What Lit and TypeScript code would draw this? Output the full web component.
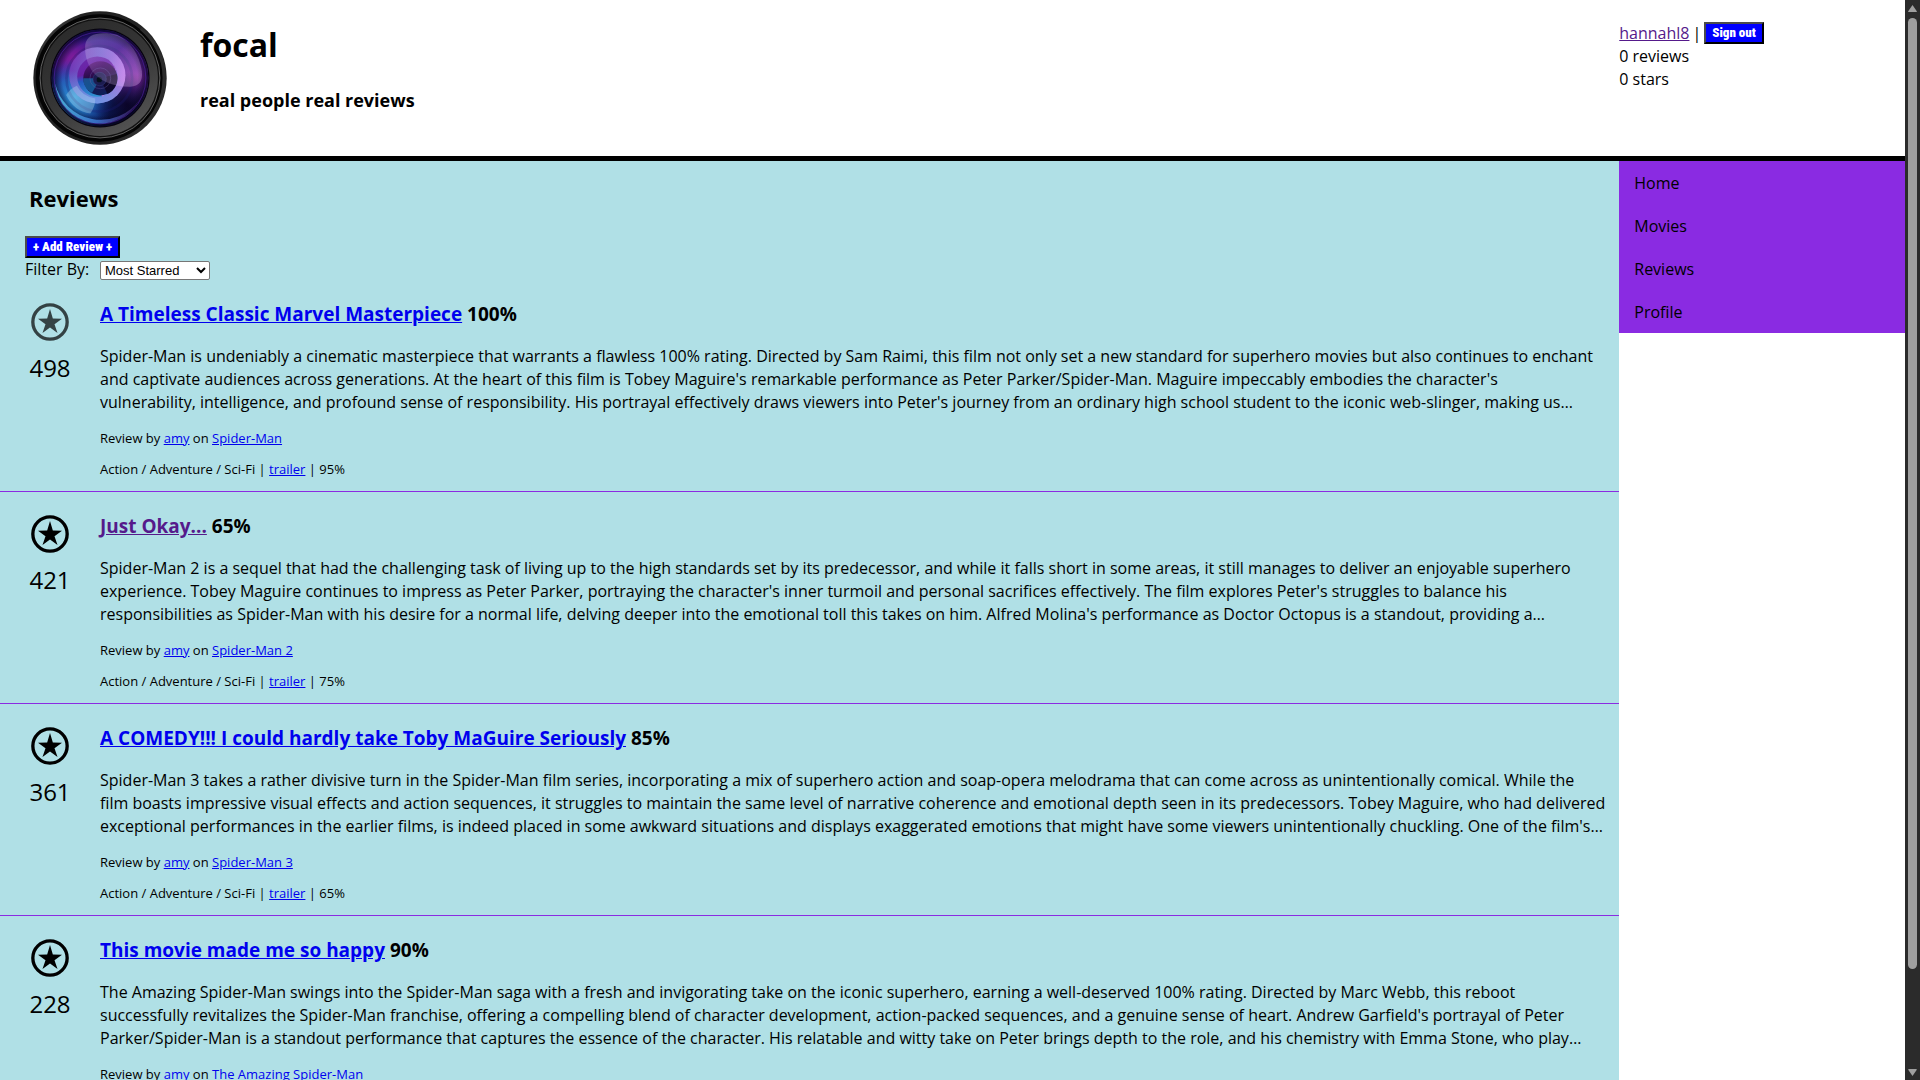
import { LitElement, html, css, svg } from "lit";
import { customElement, property } from "lit/decorators.js";

interface Review {
  title: string;
  visited?: boolean;
  muted?: boolean;
  rating: string;
  stars: number;
  lines: string[];
  movie: string;
  score: string;
}

const REVIEWS: Review[] = [
  {
    title: "A Timeless Classic Marvel Masterpiece",
    muted: true,
    rating: "100%",
    stars: 498,
    lines: [
      "Spider-Man is undeniably a cinematic masterpiece that warrants a flawless 100% rating. Directed by Sam Raimi, this film not only set a new standard for superhero movies but also continues to enchant",
      "and captivate audiences across generations. At the heart of this film is Tobey Maguire's remarkable performance as Peter Parker/Spider-Man. Maguire impeccably embodies the character's",
      "vulnerability, intelligence, and profound sense of responsibility. His portrayal effectively draws viewers into Peter's journey from an ordinary high school student to the iconic web-slinger, making us…",
    ],
    movie: "Spider-Man",
    score: "95%",
  },
  {
    title: "Just Okay...",
    visited: true,
    rating: "65%",
    stars: 421,
    lines: [
      "Spider-Man 2 is a sequel that had the challenging task of living up to the high standards set by its predecessor, and while it falls short in some areas, it still manages to deliver an enjoyable superhero",
      "experience. Tobey Maguire continues to impress as Peter Parker, portraying the character's inner turmoil and personal sacrifices effectively. The film explores Peter's struggles to balance his",
      "responsibilities as Spider-Man with his desire for a normal life, delving deeper into the emotional toll this takes on him. Alfred Molina's performance as Doctor Octopus is a standout, providing a…",
    ],
    movie: "Spider-Man 2",
    score: "75%",
  },
  {
    title: "A COMEDY!!! I could hardly take Toby MaGuire Seriously",
    rating: "85%",
    stars: 361,
    lines: [
      "Spider-Man 3 takes a rather divisive turn in the Spider-Man film series, incorporating a mix of superhero action and soap-opera melodrama that can come across as unintentionally comical. While the",
      "film boasts impressive visual effects and action sequences, it struggles to maintain the same level of narrative coherence and emotional depth seen in its predecessors. Tobey Maguire, who had delivered",
      "exceptional performances in the earlier films, is indeed placed in some awkward situations and displays exaggerated emotions that might have some viewers unintentionally chuckling. One of the film's…",
    ],
    movie: "Spider-Man 3",
    score: "65%",
  },
  {
    title: "This movie made me so happy",
    rating: "90%",
    stars: 228,
    lines: [
      "The Amazing Spider-Man swings into the Spider-Man saga with a fresh and invigorating take on the iconic superhero, earning a well-deserved 100% rating. Directed by Marc Webb, this reboot",
      "successfully revitalizes the Spider-Man franchise, offering a compelling blend of character development, action-packed sequences, and a genuine sense of heart. Andrew Garfield's portrayal of Peter",
      "Parker/Spider-Man is a standout performance that captures the essence of the character. His relatable and witty take on Peter brings depth to the role, and his chemistry with Emma Stone, who play…",
    ],
    movie: "The Amazing Spider-Man",
    score: "85%",
  },
];

const lensLogo = svg`
  <defs>
    <linearGradient id="rim" x1="0" y1="0" x2="1" y2="1">
      <stop offset="0" stop-color="#777"/><stop offset=".2" stop-color="#222"/>
      <stop offset=".75" stop-color="#222"/><stop offset="1" stop-color="#444"/>
    </linearGradient>
    <linearGradient id="barrel" x1=".2" y1="0" x2=".8" y2="1">
      <stop offset="0" stop-color="#2a2a2a"/><stop offset=".5" stop-color="#363636"/>
      <stop offset="1" stop-color="#565656"/>
    </linearGradient>
    <linearGradient id="glass" x1=".35" y1="0" x2=".55" y2="1">
      <stop offset="0" stop-color="#28188c"/><stop offset=".3" stop-color="#44188c"/>
      <stop offset=".55" stop-color="#242090"/><stop offset=".75" stop-color="#0c246c"/>
      <stop offset="1" stop-color="#081444"/>
    </linearGradient>
    <radialGradient id="violet" cx=".88" cy=".5" r=".36">
      <stop offset="0" stop-color="#8424a0"/><stop offset="1" stop-color="#8424a0" stop-opacity="0"/>
    </radialGradient>
    <radialGradient id="plum" cx=".24" cy=".32" r=".26">
      <stop offset="0" stop-color="#8a1c9c"/><stop offset="1" stop-color="#8a1c9c" stop-opacity="0"/>
    </radialGradient>
    <radialGradient id="azure" cx=".24" cy=".7" r=".4">
      <stop offset="0" stop-color="#2f9bdc"/><stop offset=".5" stop-color="#2374c4" stop-opacity=".75"/>
      <stop offset="1" stop-color="#1c4cc0" stop-opacity="0"/>
    </radialGradient>
    <radialGradient id="shade" cx=".78" cy=".78" r=".34">
      <stop offset="0" stop-color="#0a0428"/><stop offset="1" stop-color="#0a0428" stop-opacity="0"/>
    </radialGradient>
    <radialGradient id="vignette" cx=".5" cy=".5" r=".5">
      <stop offset=".78" stop-color="#06021c" stop-opacity="0"/><stop offset="1" stop-color="#06021c" stop-opacity=".8"/>
    </radialGradient>
    <linearGradient id="halo" x1="0" y1=".3" x2="1" y2=".5">
      <stop offset="0" stop-color="#7438b8"/><stop offset=".5" stop-color="#8474dc"/>
      <stop offset="1" stop-color="#cc88f4"/>
    </linearGradient>
    <linearGradient id="haloCool" x1=".5" y1=".5" x2=".4" y2="1">
      <stop offset="0" stop-color="#58a8e8" stop-opacity="0"/><stop offset="1" stop-color="#68a8ec"/>
    </linearGradient>
    <linearGradient id="iris" x1=".1" y1="0" x2=".3" y2="1">
      <stop offset="0" stop-color="#6c2cac"/><stop offset=".45" stop-color="#6820a4"/>
      <stop offset=".6" stop-color="#2458c0"/><stop offset="1" stop-color="#3090d0"/>
    </linearGradient>
    <linearGradient id="pupil" x1=".2" y1="0" x2=".5" y2="1">
      <stop offset="0" stop-color="#5c1480"/><stop offset=".45" stop-color="#280c48"/>
      <stop offset="1" stop-color="#0c2058"/>
    </linearGradient>
    <linearGradient id="shine" x1="0" y1="0" x2="1" y2="1">
      <stop offset="0" stop-color="#fff" stop-opacity=".24"/><stop offset=".45" stop-color="#e8d0ff" stop-opacity=".16"/>
      <stop offset="1" stop-color="#f0c8ff" stop-opacity=".32"/>
    </linearGradient>
    <linearGradient id="crescent" x1="0" y1="0" x2="1" y2="0">
      <stop offset="0" stop-color="#58c8f0"/><stop offset=".5" stop-color="#4080e0"/>
      <stop offset="1" stop-color="#8040c0" stop-opacity=".3"/>
    </linearGradient>
  </defs>
  <circle cx="200" cy="200" r="199" fill="url(#rim)"/>
  <circle cx="198" cy="200" r="190" fill="#040404"/>
  <path d="M322 52A192 192 0 0 1 322 348" fill="none" stroke="#2c2c2c" stroke-width="10"/>
  <circle cx="200" cy="200" r="179" fill="#111" stroke="#8c8c8c" stroke-width="2"/>
  <circle cx="200" cy="200" r="173" fill="url(#barrel)"/>
  <circle cx="200" cy="200" r="148" fill="#06040e"/>
  <circle cx="200" cy="200" r="144" fill="url(#glass)"/>
  <circle cx="200" cy="200" r="144" fill="url(#violet)"/>
  <circle cx="200" cy="200" r="144" fill="url(#plum)"/>
  <circle cx="200" cy="200" r="144" fill="url(#azure)"/>
  <circle cx="200" cy="200" r="144" fill="url(#shade)"/>
  <circle cx="200" cy="200" r="144" fill="url(#vignette)"/>
  <circle cx="200" cy="200" r="137" fill="none" stroke="#5a24b8" stroke-width="2" opacity=".8"/>
  <path d="M66 216A134 134 0 0 0 318 264A140 140 0 0 1 66 216Z" fill="url(#crescent)" opacity=".8"/>
  <circle cx="198" cy="202" r="98" fill="none" stroke="#1a1a70" stroke-width="8" opacity=".3"/>
  <circle cx="192" cy="192" r="84" fill="url(#halo)" opacity=".85"/>
  <circle cx="192" cy="192" r="84" fill="url(#haloCool)" opacity=".7"/>
  <circle cx="192" cy="196" r="60" fill="url(#iris)"/>
  <path d="M230 149A64 64 0 0 1 206 255L200 240A51 51 0 0 0 240 160Z" fill="#bc84ec"/>
  <circle cx="201" cy="201" r="51" fill="url(#pupil)"/>
  <path d="M201 201L250 188A51 51 0 0 1 222 248Z" fill="#0c0420" opacity=".8"/>
  <path d="M201 201L150 201A51 51 0 0 0 176 245Z" fill="#1474b4" opacity=".65"/>
  <circle cx="201" cy="201" r="31" fill="none" stroke="#7060b0" stroke-width="2" opacity=".5"/>
  <circle cx="199" cy="203" r="20" fill="#1c1c50" stroke="#44509c" stroke-width="1"/>
  <circle cx="198" cy="205" r="8" fill="#04101c"/>
  <path d="M156 101C160 68 198 60 251 71C290 90 318 130 325 180C328 212 316 224 290 226C230 226 196 204 176 178C160 154 154 128 156 101Z" fill="url(#shine)"/>
  <path d="M99 251Q110 232 131 223Q146 254 186 261Q186 286 171 306Q122 300 99 251Z" fill="#b8dcf0" opacity=".35"/>
`;

@customElement("star-button")
export class StarButton extends LitElement {
  @property({ type: Boolean }) muted = false;

  static styles = css`
    :host { display: block; }
    .star { display: block; padding: 0; border: 0; background: none; color: #000; cursor: pointer; }
    .muted { opacity: 0.7; }
    .icon { display: block; width: 38px; height: 38px; }
  `;

  render() {
    return html`<button class="star ${this.muted ? "muted" : ""}" aria-label="Star this review">
      <svg class="icon" viewBox="0 0 114 114" aria-hidden="true">
        <circle cx="57" cy="57" r="51.5" fill="none" stroke="currentColor" stroke-width="10" />
        <path d="M57 18L65.500 46.500L93 47.500L70.500 63.500L79.500 90L57 73.500L34.500 90L43.500 63.500L21 47.500L48.500 46.500Z" fill="currentColor" />
      </svg>
    </button>`;
  }
}

@customElement("review-item")
export class ReviewItem extends LitElement {
  @property({ attribute: false }) review!: Review;

  static styles = css`
    :host { display: block; }
    .item { display: grid; grid-template-columns: 100px 1fr; padding: 22px 0 12px; border-bottom: 1px solid blueviolet; }
    .votes { display: flex; flex-direction: column; align-items: center; gap: 10px; padding-top: 1px; }
    .count { font-size: 24px; line-height: 34px; }
    .title { margin: 0 0 19px; font-size: 19px; line-height: 24px; }
    .text { margin: 0 0 14px; line-height: 23px; white-space: nowrap; }
    .meta { margin: 0 0 11px; font-size: 13px; line-height: 20px; }
    .meta:last-child { margin: 0; }
    .link { color: #0000ee; }
    .visited { color: #551a8b; }
  `;

  render() {
    const r = this.review;
    return html`<article class="item">
      <div class="votes">
        <star-button ?muted=${r.muted}></star-button>
        <span class="count">${r.stars}</span>
      </div>
      <div>
        <h3 class="title"><a class="link ${r.visited ? "visited" : ""}" href="#review">${r.title}</a> ${r.rating}</h3>
        <p class="text">${r.lines.map((line, i) => (i ? html`<br />${line}` : line))}</p>
        <p class="meta">Review by <a class="link" href="#amy">amy</a> on <a class="link" href="#movie">${r.movie}</a></p>
        <p class="meta">Action / Adventure / Sci-Fi | <a class="link" href="#trailer">trailer</a> | ${r.score}</p>
      </div>
    </article>`;
  }
}

@customElement("app-root")
export class AppRoot extends LitElement {
  static styles = css`
    :host {
      display: flex;
      height: 100vh;
      overflow: hidden;
      background: #fff;
      color: #000;
      font-family: "Comic Sans MS", "Open Sans", sans-serif;
      font-size: 16px;
      line-height: 23px;
    }
    .page { flex: 1; min-width: 0; overflow: hidden; }
    .header { display: grid; grid-template-columns: 85% 15%; border-bottom: 5px solid #000; }
    .brand { display: flex; gap: 33px; padding: 11px 33px; }
    .logo { display: block; width: 134px; height: 134px; }
    .name { margin: 12px 0 20px; font-size: 32px; line-height: 44px; }
    .tagline { margin: 0; font-size: 18px; line-height: 26px; }
    .user { padding-top: 21px; }
    .line { display: flex; align-items: center; gap: 3px; line-height: 24px; }
    .visited { color: #551a8b; }
    .button {
      height: 22px;
      padding: 0 6px;
      border: 2px solid;
      border-color: #4c4c4c #000 #000 #4c4c4c;
      background: #00f;
      color: #fff;
      font: 900 13px/18px Impact, "Roboto Condensed", "Liberation Sans Narrow", Roboto, sans-serif;
    }
    .body { display: grid; grid-template-columns: 85% 15%; align-items: start; }
    .main { min-width: 0; overflow: hidden; background: powderblue; }
    .heading { margin: 0; padding: 20px 29px; font-size: 22px; line-height: 35px; }
    .tools { padding-left: 25px; }
    .tools .button { display: block; }
    .filter { display: flex; align-items: end; gap: 5px; height: 22px; }
    .label { min-width: 70px; line-height: 22px; }
    .select {
      width: 110px;
      height: 19px;
      padding: 0;
      border: 1px solid #767676;
      border-radius: 2px;
      background: #fff;
      color: #000;
      font: 13px "Liberation Sans", Arial, sans-serif;
    }
    .nav { background: blueviolet; }
    .item { display: block; padding: 11px 15px 9px; color: #000; text-decoration: none; }
    .scrollbar { display: flex; flex-direction: column; align-items: center; gap: 6px; width: 15px; padding: 5px 0 4px; box-sizing: border-box; background: #2b2b2b; }
    .arrow { display: block; width: 9px; height: 7px; }
    .track { flex: 1; width: 9px; }
    .thumb { height: 91%; border-radius: 5px; background: #9f9f9f; }
  `;

  render() {
    return html`
      <div class="page">
        <header class="header">
          <div class="brand">
            <svg class="logo" viewBox="0 0 400 400" role="img" aria-label="focal logo">${lensLogo}</svg>
            <div>
              <h1 class="name">focal</h1>
              <h3 class="tagline">real people real reviews</h3>
            </div>
          </div>
          <div class="user">
            <div class="line"><a class="visited" href="#profile">hannahl8</a> | <button class="button">Sign out</button></div>
            <div>0 reviews</div>
            <div>0 stars</div>
          </div>
        </header>
        <div class="body">
          <main class="main">
            <h2 class="heading">Reviews</h2>
            <div class="tools">
              <button class="button">+ Add Review +</button>
              <div class="filter">
                <label class="label" for="filter">Filter By:</label>
                <select class="select" id="filter">
                  <option>Most Starred</option>
                  <option>Least Starred</option>
                </select>
              </div>
            </div>
            ${REVIEWS.map((review) => html`<review-item .review=${review}></review-item>`)}
          </main>
          <nav class="nav">
            ${["Home", "Movies", "Reviews", "Profile"].map((label) => html`<a class="item" href="#${label}">${label}</a>`)}
          </nav>
        </div>
      </div>
      <div class="scrollbar" aria-hidden="true">
        <svg class="arrow" viewBox="0 0 9 7"><path d="M4.500 0L9 6.500Q8.500 7 8 7H1Q.5 7 0 6.500Z" fill="#9f9f9f" /></svg>
        <div class="track"><div class="thumb"></div></div>
        <svg class="arrow" viewBox="0 0 9 7"><path d="M4.500 7L0 .5Q.5 0 1 0H8Q8.500 0 9 .5Z" fill="#9f9f9f" /></svg>
      </div>
    `;
  }
}
